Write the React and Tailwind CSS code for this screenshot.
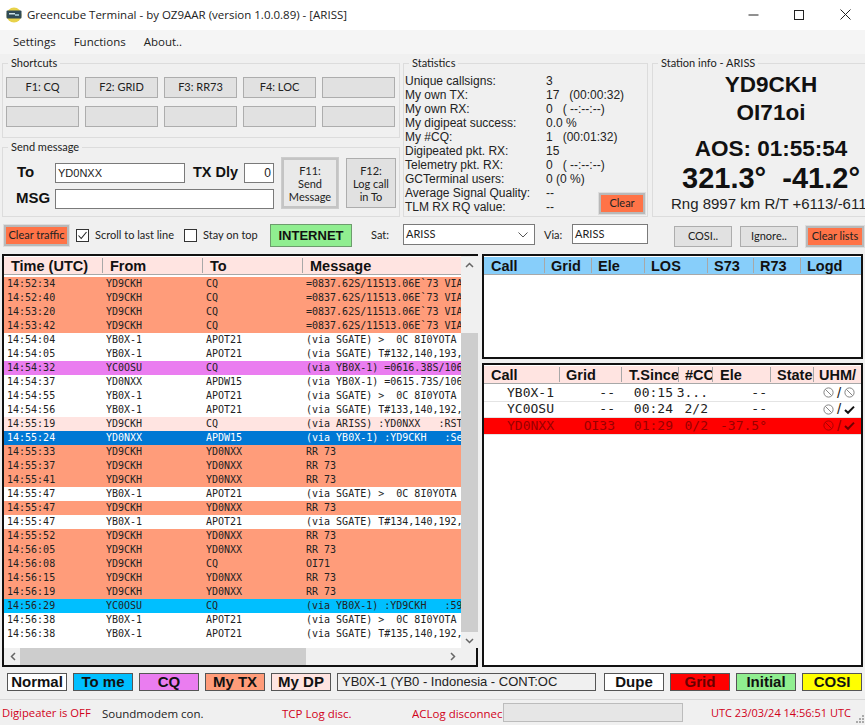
import React from "react";

const ui = { fontFamily: '"Liberation Sans", Arial, sans-serif' };
const segoe = { fontFamily: '"Open Sans", "Noto Sans", sans-serif' };
const lato = { fontFamily: 'Lato, "Open Sans", sans-serif' };
const mono = { fontFamily: '"DejaVu Sans Mono", monospace' };

const O = "bg-[#ff9c7a]", W = "bg-white", M = "bg-[#ea7df0]", P = "bg-[#ffe4e1]", B = "bg-[#0078d4] text-white", C = "bg-[#00bfff]";
const rows = [
  ["14:52:34","YD9CKH","CQ","=0837.62S/11513.06E`73 VIA",O],
  ["14:52:40","YD9CKH","CQ","=0837.62S/11513.06E`73 VIA",O],
  ["14:53:20","YD9CKH","CQ","=0837.62S/11513.06E`73 VIA",O],
  ["14:53:42","YD9CKH","CQ","=0837.62S/11513.06E`73 VIA",O],
  ["14:54:04","YB0X-1","APOT21","(via SGATE) >  0C 8I0YOTA",W],
  ["14:54:05","YB0X-1","APOT21","(via SGATE) T#132,140,193,",W],
  ["14:54:32","YC0OSU","CQ","(via YB0X-1) =0616.38S/106",M],
  ["14:54:37","YD0NXX","APDW15","(via YB0X-1) =0615.73S/106",W],
  ["14:54:55","YB0X-1","APOT21","(via SGATE) >  0C 8I0YOTA",W],
  ["14:54:56","YB0X-1","APOT21","(via SGATE) T#133,140,192,",W],
  ["14:55:19","YD9CKH","CQ","(via ARISS) :YD0NXX   :RST",P],
  ["14:55:24","YD0NXX","APDW15","(via YB0X-1) :YD9CKH   :Se",B],
  ["14:55:33","YD9CKH","YD0NXX","RR 73",O],
  ["14:55:37","YD9CKH","YD0NXX","RR 73",O],
  ["14:55:41","YD9CKH","YD0NXX","RR 73",O],
  ["14:55:47","YB0X-1","APOT21","(via SGATE) >  0C 8I0YOTA",W],
  ["14:55:47","YD9CKH","YD0NXX","RR 73",O],
  ["14:55:47","YB0X-1","APOT21","(via SGATE) T#134,140,192,",W],
  ["14:55:52","YD9CKH","YD0NXX","RR 73",O],
  ["14:56:05","YD9CKH","YD0NXX","RR 73",O],
  ["14:56:08","YD9CKH","CQ","OI71",O],
  ["14:56:15","YD9CKH","YD0NXX","RR 73",O],
  ["14:56:19","YD9CKH","YD0NXX","RR 73",O],
  ["14:56:29","YC0OSU","CQ","(via YB0X-1) :YD9CKH   :59",C],
  ["14:56:38","YB0X-1","APOT21","(via SGATE) >  0C 8I0YOTA",W],
  ["14:56:38","YB0X-1","APOT21","(via SGATE) T#135,140,192,",W],
];

const stats = [
  ["Unique callsigns:", "3"],
  ["My own TX:", "17   (00:00:32)"],
  ["My own RX:", "0   ( --:--:--)"],
  ["My digipeat success:", "0.0 %"],
  ["My #CQ:", "1   (00:01:32)"],
  ["Digipeated pkt. RX:", "15"],
  ["Telemetry pkt. RX:", "0   ( --:--:--)"],
  ["GCTerminal users:", "0 (0 %)"],
  ["Average Signal Quality:", "--"],
  ["TLM RX RQ value:", "--"],
];

function Group({ title, className, children }) {
  return (
    <div className={"border border-[#dcdcdc] relative " + className}>
      <span style={lato} className="absolute left-[5px] top-[-9px] bg-[#f0f0f0] px-[3px] text-[11px] font-normal leading-[16px] text-[#222] whitespace-nowrap">{title}</span>
      {children}
    </div>
  );
}

function Btn({ children, className = "" }) {
  return (
    <div style={lato} className={"border border-[#adadad] bg-[#e1e1e1] flex items-center justify-center text-center text-[11px] text-[#222] " + className}>
      {children}
    </div>
  );
}

function OrangeBtn({ children, className = "" }) {
  return (
    <div style={lato} className={"border-2 border-[#b9b9b9] bg-[#ff7347] flex items-center justify-center text-[11px] text-[#222] whitespace-nowrap outline-1 outline-[#ddd] " + className}>
      {children}
    </div>
  );
}

function Check({ checked }) {
  return (
    <div className="w-[13px] h-[13px] border border-[#333] bg-white flex items-center justify-center shrink-0">
      {checked && (
        <svg width="11" height="11" viewBox="0 0 11 11"><path d="M1.5 5.5 L4.2 8.5 L9.5 2" stroke="#222" strokeWidth="1.1" fill="none" /></svg>
      )}
    </div>
  );
}

function Head({ cols, bg }) {
  return (
    <div className={"flex h-[18px] mt-px shrink-0 border-b border-[#a8a8a8] " + bg} style={ui}>
      {cols.map(([t, w, pl], i) => (
        <div key={i} style={{ width: w, paddingLeft: pl }} className="relative shrink-0 overflow-hidden whitespace-nowrap text-[14.5px] leading-[18px] font-bold text-[#111]">
          {t}
          {i < cols.length - 1 && <span className="absolute right-0 top-[1px] bottom-[1px] w-px bg-[#a8a8a8]" />}
        </div>
      ))}
    </div>
  );
}

function Ban({ color = "#777" }) {
  return (
    <svg width="11" height="11" viewBox="0 0 11 11" className="shrink-0">
      <circle cx="5.5" cy="5.5" r="4.6" stroke={color} strokeWidth="0.9" fill="none" />
      <path d="M2.4 2.4 L8.6 8.6" stroke={color} strokeWidth="0.9" />
    </svg>
  );
}
function Tick({ color = "#111" }) {
  return (
    <svg width="11" height="11" viewBox="0 0 11 11" className="shrink-0">
      <path d="M1 6 L4 8.8 L10 2.6" stroke={color} strokeWidth="2" fill="none" />
    </svg>
  );
}

const live = [
  { c: "YB0X-1", g: "--", t: "00:15", n: "3...", e: "--", b: false, bg: "bg-white", fg: "text-[#222]", ic: "#777" },
  { c: "YC0OSU", g: "--", t: "00:24", n: "2/2", e: "--", b: true, bg: "bg-white", fg: "text-[#222]", ic: "#777", tk: "#111" },
  { c: "YD0NXX", g: "OI33", t: "01:29", n: "0/2", e: "-37.5°", b: true, bg: "bg-[#ff0000]", fg: "text-[#990000]", ic: "#a00000", tk: "#700000" },
];

function Legend({ children, className = "" }) {
  return (
    <div style={ui} className={"w-[60px] h-[18px] border border-[#555] flex items-center justify-center text-[15px] font-bold text-[#111] shrink-0 " + className}>
      {children}
    </div>
  );
}

export default function App() {
  return (
    <div className="w-[865px] h-[725px] bg-[#f0f0f0] overflow-hidden flex flex-col" style={ui}>
      {/* title bar */}
      <div className="h-[30px] bg-white flex items-center shrink-0">
        <svg width="16" height="16" viewBox="0 0 16 16" className="ml-[6px] shrink-0">
          <circle cx="8" cy="8" r="7.5" fill="#e8d24a" />
          <rect x="0.5" y="3.5" width="15" height="8" rx="1" fill="#2f4a55" />
          <rect x="3" y="6" width="6" height="1.5" fill="#cfe3e8" />
          <rect x="9" y="7" width="4" height="2" fill="#8fb4bf" />
        </svg>
        <span style={segoe} className="ml-[5px] text-[11.5px] text-[#222] whitespace-nowrap">Greencube Terminal - by OZ9AAR (version 1.0.0.89) - [ARISS]</span>
        <div className="ml-auto flex items-center mr-[-3px] pb-[1px]">
          <div className="w-[46px] flex justify-center"><svg width="11" height="11" viewBox="0 0 11 11"><path d="M0.5 6H10.5" stroke="#222" /></svg></div>
          <div className="w-[46px] flex justify-center"><svg width="10" height="10" viewBox="0 0 10 10"><rect x="0.5" y="0.5" width="9" height="9" stroke="#222" fill="none" /></svg></div>
          <div className="w-[46px] flex justify-center"><svg width="11" height="11" viewBox="0 0 11 11"><path d="M0.5 0.5L10.5 10.5M10.5 0.5L0.5 10.5" stroke="#222" /></svg></div>
        </div>
      </div>
      {/* menu */}
      <div style={segoe} className="h-[24px] bg-[#f5f5f5] flex items-center pl-[13px] gap-[18px] text-[11.5px] text-[#222] shrink-0">
        <span>Settings</span><span>Functions</span><span>About..</span>
      </div>

      {/* top panels */}
      <div className="flex h-[154px] mt-[9px] ml-[2px] shrink-0">
        <div className="w-[398px] flex flex-col gap-[9px] shrink-0">
          <Group title="Shortcuts" className="h-[75px] pt-[13px] pl-[3px]">
            <div className="grid grid-cols-[repeat(5,73px)] gap-x-[6px] gap-y-[8px] auto-rows-[21px]">
              <Btn>F1: CQ</Btn><Btn>F2: GRID</Btn><Btn>F3: RR73</Btn><Btn>F4: LOC</Btn><Btn />
              <Btn /><Btn /><Btn /><Btn /><Btn />
            </div>
          </Group>
          <Group title="Send message" className="h-[70px] flex">
            <div className="w-[52px] pl-[13px] pt-[14px] shrink-0 text-[15px] font-bold text-[#111]">
              <div className="leading-[20px] pl-[1px]">To</div>
              <div className="leading-[20px] mt-[6px]">MSG</div>
            </div>
            <div className="w-[219px] pt-[15px] shrink-0">
              <div className="flex items-center h-[20px]">
                <div className="w-[130px] h-[20px] border border-[#7a7a7a] bg-white text-[11px] leading-[18px] pl-[2px] text-[#222]">YD0NXX</div>
                <span className="ml-[8px] w-[51px] text-[14.5px] font-bold text-[#111] whitespace-nowrap">TX Dly</span>
                <div className="w-[30px] h-[20px] border border-[#7a7a7a] bg-white text-[12px] leading-[18px] pr-[2px] text-right text-[#222]">0</div>
              </div>
              <div className="h-[20px] mt-[6px] border border-[#7a7a7a] bg-white" />
            </div>
            <div style={lato} className="ml-[8px] mt-[10px] w-[56px] h-[50px] border-2 border-[#c4c4c4] outline-1 outline-[#ccc] bg-[#e9e9e9] flex items-center justify-center text-center text-[11px] leading-[13px] text-[#222] shrink-0">F11:<br />Send<br />Message</div>
            <Btn className="ml-[8px] mt-[10px] w-[50px] h-[50px] leading-[13px] shrink-0">F12:<br />Log call<br />in To</Btn>
          </Group>
        </div>

        <Group title="Statistics" className="ml-[3px] w-[245px] shrink-0 pl-[1px] pt-[10px]">
          <div className="flex flex-col">
            {stats.map(([a, b]) => (
              <div key={a} className="flex h-[14px] items-center text-[12px] text-[#222] whitespace-pre">
                <span className="w-[141px] shrink-0">{a}</span><span>{b}</span>
              </div>
            ))}
          </div>
          <OrangeBtn className="absolute left-[195px] top-[129px] w-[46px] h-[21px]">Clear</OrangeBtn>
        </Group>

        <Group title="Station info - ARISS" className="ml-[4px] w-[216px] shrink-0 border-r-0 text-center font-bold text-[#111] overflow-visible">
          <div className="w-[238px] ml-[-1px] whitespace-nowrap overflow-hidden">
            <div className="text-[22.5px] leading-[26px] mt-[8px]">YD9CKH</div>
            <div className="text-[22.5px] leading-[26px] mt-[2px]">OI71oi</div>
            <div className="text-[22.5px] leading-[26px] mt-[10px]">AOS: 01:55:54</div>
            <div className="text-[29px] leading-[32px] whitespace-pre">321.3°  -41.2°</div>
            <div className="text-[15px] leading-[18px] mt-[1px] font-normal text-[#222] text-left pl-[19px]">Rng 8997 km R/T +6113/-6113</div>
          </div>
        </Group>
      </div>

      {/* controls row */}
      <div style={lato} className="flex h-[24px] mt-[7px] text-[11px] text-[#222] shrink-0 relative">
        <OrangeBtn className="ml-[4px] mt-[1px] w-[65px] h-[21px]">Clear traffic</OrangeBtn>
        <div className="ml-[7px] mt-[3px] flex items-center h-[16px]"><Check checked /><span className="ml-[6px] whitespace-nowrap w-[89px]">Scroll to last line</span></div>
        <div className="mt-[3px] flex items-center h-[16px]"><Check /><span className="ml-[6px] whitespace-nowrap w-[67px]">Stay on top</span></div>
        <div style={ui} className="w-[82px] h-[23px] border border-[#6d9c6d] bg-[#90ee90] flex items-center justify-center text-[13px] font-bold text-[#111]">INTERNET</div>
        <span className="ml-[19px] mt-[3px] w-[32px]">Sat:</span>
        <div className="w-[132px] h-[21px] border border-[#7a7a7a] bg-white flex items-center pl-[2px] justify-between pr-[6px]">
          <span>ARISS</span>
          <svg width="10" height="6" viewBox="0 0 10 6"><path d="M0.5 0.5L5 5L9.5 0.5" stroke="#555" fill="none" /></svg>
        </div>
        <span className="ml-[9px] mt-[3px] w-[28px]">Via:</span>
        <div className="w-[76px] h-[20px] border border-[#7a7a7a] bg-white pl-[2px] leading-[18px]">ARISS</div>
        <Btn className="ml-[26px] mt-[2px] w-[58px] h-[21px]">COSI..</Btn>
        <Btn className="ml-[8px] mt-[2px] w-[58px] h-[21px]">Ignore..</Btn>
        <OrangeBtn className="ml-[8px] mt-[2px] w-[58px] h-[21px]">Clear lists</OrangeBtn>
      </div>

      {/* tables */}
      <div className="flex h-[413px] mt-[6px] ml-[2px] gap-[4px] shrink-0">
        <div className="w-[476px] border-2 border-[#111] bg-white flex flex-col shrink-0 relative">
          <div className="flex flex-1 min-h-0">
            <div className="w-[457px] shrink-0 flex flex-col">
              <Head bg="bg-[#ffe4e1]" cols={[["Time (UTC)", 99, 7], ["From", 100, 7], ["To", 100, 7], ["Message", 158, 7]]} />
              <div style={mono} className="text-[10px] mt-[2px]">
                {rows.map((r, i) => (
                  <div key={i} className={"flex h-[14px] leading-[14px] text-[#222] whitespace-pre overflow-hidden " + r[4]}>
                    <span className="w-[102px] pl-[3px] shrink-0">{r[0]}</span>
                    <span className="w-[100px] shrink-0">{r[1]}</span>
                    <span className="w-[100px] shrink-0">{r[2]}</span>
                    <span className="shrink-0">{r[3]}</span>
                  </div>
                ))}
              </div>
            </div>
            <div className="w-[17px] bg-[#f0f0f0] flex flex-col items-center shrink-0">
              <svg width="9" height="6" viewBox="0 0 9 6" className="mt-[6px]"><path d="M1 5L4.5 1.5L8 5" stroke="#666" strokeWidth="1.5" fill="none" /></svg>
              <div className="w-[17px] h-[299px] bg-[#cdcdcd] mt-[65px]" />
              <svg width="9" height="6" viewBox="0 0 9 6" className="mt-[6px]"><path d="M1 1L4.5 4.5L8 1" stroke="#666" strokeWidth="1.5" fill="none" /></svg>
            </div>
          </div>
          <div className="h-[17px] bg-[#f0f0f0] flex items-center shrink-0">
            <svg width="6" height="9" viewBox="0 0 6 9" className="ml-[6px] shrink-0"><path d="M5 1L1.5 4.5L5 8" stroke="#666" strokeWidth="1.5" fill="none" /></svg>
            <div className="ml-[4px] w-[286px] h-[17px] bg-[#cdcdcd] shrink-0" />
            <svg width="6" height="9" viewBox="0 0 6 9" className="ml-[144px] shrink-0"><path d="M1 1L4.5 4.5L1 8" stroke="#666" strokeWidth="1.5" fill="none" /></svg>
          </div>
        </div>

        <div className="w-[381px] flex flex-col gap-[4px] shrink-0">
          <div className="h-[105px] border-2 border-[#111] bg-white shrink-0">
            <Head bg="bg-[#87cefa]" cols={[["Call", 61, 7], ["Grid", 47, 6], ["Ele", 53, 6], ["LOS", 63, 6], ["S73", 46, 6], ["R73", 47, 6], ["Logd", 60, 6]]} />
          </div>
          <div className="flex-1 border-2 border-[#111] bg-white">
            <Head bg="bg-[#ffe4e1]" cols={[["Call", 76, 7], ["Grid", 62, 6], ["T.Since", 57, 7], ["#CC", 34, 6], ["Ele", 58, 7], ["State", 43, 6], ["UHM/", 47, 5]]} />
            <div style={mono} className="text-[13px] text-[#222] mt-px">
              {live.map((r) => (
                <div key={r.c} className={"flex h-[16.5px] items-center leading-[16px] whitespace-pre border-b border-[#e4e4e4] " + r.bg + " " + r.fg}>
                  <span className="w-[75px] pl-[23px] shrink-0">{r.c}</span>
                  <span className="w-[56px] text-right shrink-0">{r.g}</span>
                  <span className="w-[58px] text-right shrink-0">{r.t}</span>
                  <span className="w-[35px] shrink-0 overflow-hidden flex justify-end">{r.n}</span>
                  <span className="w-[59px] text-right shrink-0">{r.e}</span>
                  <span className="ml-[56px] flex items-center gap-[3px] shrink-0">
                    <Ban color={r.ic} />
                    <span style={ui} className="text-[15px] leading-[16px]">/</span>
                    {r.b ? <Tick color={r.tk} /> : <Ban color={r.ic} />}
                  </span>
                </div>
              ))}
            </div>
          </div>
        </div>
      </div>

      {/* legend */}
      <div className="flex h-[18px] mt-[6px] ml-[7px] gap-[6px] shrink-0">
        <Legend className="bg-white">Normal</Legend>
        <Legend className="bg-[#00bfff]">To me</Legend>
        <Legend className="bg-[#ea7df0]">CQ</Legend>
        <Legend className="bg-[#ff9c7a]">My TX</Legend>
        <Legend className="bg-[#ffe4e1]">My DP</Legend>
        <div className="w-[259px] border border-[#555] bg-[#f0f0f0] text-[13px] leading-[16px] pl-[4px] text-[#222] whitespace-nowrap shrink-0">YB0X-1 (YB0 - Indonesia - CONT:OC</div>
        <Legend className="ml-[2px] bg-white">Dupe</Legend>
        <Legend className="bg-[#ff0000] border-[#8b3a3a] !text-[#660000]">Grid</Legend>
        <Legend className="bg-[#90ee90]">Initial</Legend>
        <Legend className="bg-[#ffff00]">COSI</Legend>
      </div>

      {/* status bar */}
      <div style={segoe} className="h-[26px] mt-[8px] border-t border-[#d8d8d8] flex items-center text-[#d0021b] whitespace-nowrap relative shrink-0">
        <span className="ml-[2px] w-[100px] shrink-0 text-[11.25px] pt-[2px]">Digipeater is OFF</span>
        <span className="w-[180px] shrink-0 text-[11.5px] text-[#222] pt-[2px]">Soundmodem con.</span>
        <span className="w-[130px] shrink-0 text-[11.5px] pt-[2px]">TCP Log disc.</span>
        <span className="w-[91px] overflow-hidden shrink-0 text-[11.5px] pt-[2px]">ACLog disconnec</span>
        <div className="w-[180px] h-[19px] bg-[#e6e6e6] border border-[#bcbcbc] shrink-0" />
        <span className="ml-[28px] shrink-0 text-[11px] pt-[2px]">UTC 23/03/24 14:56:51 UTC</span>
        <svg width="10" height="10" viewBox="0 0 10 10" className="absolute right-0 bottom-[1px]">
          <g fill="#aaa"><rect x="7" y="1" width="2" height="2" /><rect x="4" y="4" width="2" height="2" /><rect x="7" y="4" width="2" height="2" /><rect x="1" y="7" width="2" height="2" /><rect x="4" y="7" width="2" height="2" /><rect x="7" y="7" width="2" height="2" /></g>
        </svg>
      </div>
    </div>
  );
}
